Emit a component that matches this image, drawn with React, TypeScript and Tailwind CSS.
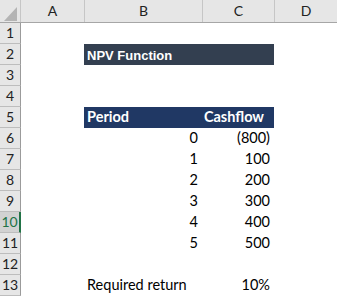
import React from 'react'

const cols = [
  { id: 'A', w: 'w-[64px]' },
  { id: 'B', w: 'w-[118px]' },
  { id: 'C', w: 'w-[72px]' },
]

const flows = [
  { p: '0', c: '(800)' },
  { p: '1', c: '100' },
  { p: '2', c: '200' },
  { p: '3', c: '300' },
  { p: '4', c: '400' },
  { p: '5', c: '500' },
]

const RowHead = ({ n, active }: { n: number; active?: boolean }) => (
  <div
    className={
      active
        ? 'w-[21px] shrink-0 h-full flex items-end justify-center pb-[3px] bg-[#d2d2d2] text-[#217346] border-b border-[#bdbdbd] border-r-2 border-r-[#217346] text-[14px] leading-none'
        : 'w-[21px] shrink-0 h-full flex items-end justify-center pb-[3px] bg-[#e6e6e6] text-[#222] border-b border-[#bdbdbd] border-r border-r-[#9b9b9b] text-[14px] leading-none'
    }
  >
    {n}
  </div>
)

const Row = ({ n, children }: { n: number; children?: React.ReactNode }) => (
  <div className="flex h-[21px]">
    <RowHead n={n} active={n === 10} />
    <div className="w-[63px] shrink-0" />
    {children}
  </div>
)

export default function App() {
  return (
    <div className="w-[337px] h-[298px] bg-white overflow-hidden font-['Lato',sans-serif] text-black">
      {/* column headers */}
      <div className="flex h-[23px] bg-[#e6e6e6] border-b border-[#a6a6a6]">
        <div className="w-[21px] shrink-0 border-r border-[#c6c6c6] flex items-end justify-end pr-[3px] pb-[1px]">
          <svg width="13" height="14" viewBox="0 0 13 14">
            <polygon points="13,0 13,14 0,14" fill="#b4b4b4" />
          </svg>
        </div>
        {cols.map((c) => (
          <div
            key={c.id}
            className={`${c.w} shrink-0 border-r border-[#c6c6c6] flex items-end justify-center pb-[4px] text-[14px] leading-none text-[#222]`}
          >
            {c.id}
          </div>
        ))}
        <div className="flex-1 flex items-end justify-center pb-[4px] text-[14px] leading-none text-[#222]">D</div>
      </div>

      <Row n={1} />
      <Row n={2}>
        <div className="w-[190px] h-full bg-[#333f50] flex items-center pl-[3px] pt-[1px] text-white font-['Liberation_Sans',sans-serif] font-bold text-[13px] leading-none">
          NPV Function
        </div>
      </Row>
      <Row n={3} />
      <Row n={4} />
      <Row n={5}>
        <div className="w-[190px] h-full bg-[#203864] flex items-end justify-between pb-[4px] pl-[3px] pr-[10px] text-white font-bold text-[14.5px] leading-none">
          <span>Period</span>
          <span>Cashflow</span>
        </div>
      </Row>
      {flows.map((f, i) => (
        <Row key={f.p} n={6 + i}>
          <div className="w-[118px] h-full flex items-end justify-end pr-[4px] pb-[4px] text-[14.5px] leading-none">{f.p}</div>
          <div className="w-[72px] h-full flex items-end justify-end pr-[4px] pb-[4px] text-[14.5px] leading-none">{f.c}</div>
        </Row>
      ))}
      <Row n={12} />
      <Row n={13}>
        <div className="w-[118px] h-full flex items-end pl-[3px] pb-[4px] text-[14.5px] leading-none">Required return</div>
        <div className="w-[72px] h-full flex items-end justify-end pr-[4px] pb-[4px] text-[14.5px] leading-none">10%</div>
      </Row>
    </div>
  )
}
